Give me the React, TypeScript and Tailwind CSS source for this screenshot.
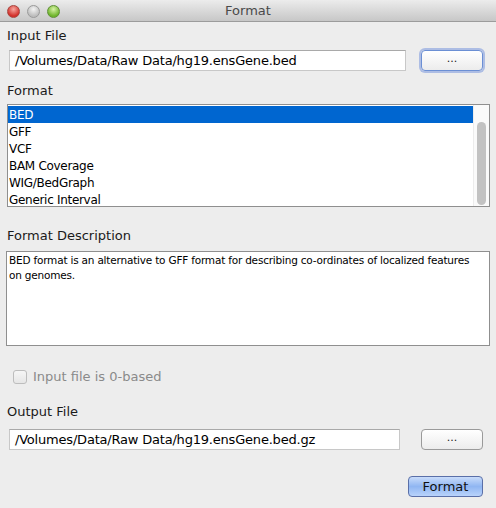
import React from "react";

const formats = ["BED", "GFF", "VCF", "BAM Coverage", "WIG/BedGraph", "Generic Interval"];

function Light({ from, to, ring }: { from: string; to: string; ring: string }) {
  return (
    <span
      className="block h-[13px] w-[13px] rounded-full border"
      style={{ background: `radial-gradient(circle at 50% 30%, ${from}, ${to} 70%)`, borderColor: ring }}
    />
  );
}

function Field({ value, width }: { value: string; width: string }) {
  return (
    <div
      className={`${width} flex h-[21px] items-center border border-[#c8c8c8] border-t-[#a9a9a9] bg-white pl-[5px] text-[13px] tracking-[-0.2px] text-black`}
    >
      {value}
    </div>
  );
}

function Browse({ focused }: { focused?: boolean }) {
  return (
    <button
      className={`flex h-[21px] w-[62px] items-center justify-center rounded-[4px] border bg-gradient-to-b from-white to-[#ececec] pb-[3px] text-[11px] text-[#222] ${
        focused ? "border-[#6b8fd4] shadow-[0_0_0_2px_rgba(120,150,220,0.55)]" : "border-[#9a9a9a]"
      }`}
    >
      ...
    </button>
  );
}

export default function App() {
  return (
    <div
      className="flex h-[508px] w-[496px] flex-col overflow-hidden bg-[#ededed] text-[#1a1a1a]"
      style={{ fontFamily: '"DejaVu Sans", "Liberation Sans", sans-serif' }}
    >
      <div className="relative flex h-[22px] shrink-0 items-center justify-center border-b border-[#9c9c9c] bg-gradient-to-b from-[#ececec] to-[#c7c7c7]">
        <div className="absolute left-[7px] top-[5px] flex gap-[7px]">
          <Light from="#f7a8a0" to="#d2302a" ring="#a8443e" />
          <Light from="#f4f4f4" to="#bdbdbd" ring="#9a9a9a" />
          <Light from="#d8f3a6" to="#6fb52c" ring="#5f8f36" />
        </div>
        <span className="text-[13px] text-[#4a4a4a]">Format</span>
      </div>

      <div className="flex flex-col px-[7px]">
        <div className="mt-[6px] text-[13px] leading-[16px]">Input File</div>
        <div className="mt-[6px] flex items-center">
          <div className="ml-[2px]">
            <Field value="/Volumes/Data/Raw Data/hg19.ensGene.bed" width="w-[397px]" />
          </div>
          <div className="ml-[15px]">
            <Browse focused />
          </div>
        </div>

        <div className="mt-[12px] text-[13px] leading-[16px]">Format</div>
        <div className="mt-[5px] flex h-[103px] w-[483px] border border-[#8f8f8f] bg-white">
          <div className="flex flex-1 flex-col pt-px">
            {formats.map((f, i) => (
              <div
                key={f}
                className={`flex h-[17px] items-center pl-px text-[12px] tracking-[-0.3px] ${
                  i === 0 ? "bg-[#0066d0] text-white" : "text-black"
                }`}
              >
                {f}
              </div>
            ))}
          </div>
          <div className="flex w-[16px] flex-col border-l border-[#ececec] bg-[#fafafa] px-[3px] pb-px pt-[17px]">
            <div className="flex-1 rounded-full bg-[#c2c2c2]" />
          </div>
        </div>

        <div className="mt-[21px] text-[13px] leading-[16px]">Format Description</div>
        <div className="-ml-px mt-[7px] h-[95px] w-[484px] border border-[#8f8f8f] bg-white pl-[2px] pr-[12px] pt-px text-[10.5px] leading-[15px] tracking-[-0.2px] text-black">
          BED format is an alternative to GFF format for describing co-ordinates of localized features on genomes.
        </div>

        <div className="mt-[23px] flex items-center">
          <span className="ml-[6px] h-[14px] w-[14px] rounded-[3px] border border-[#bdbdbd] bg-gradient-to-b from-[#f6f6f6] to-[#e6e6e6]" />
          <span className="ml-[6px] text-[13px] leading-[16px] text-[#8a8a8a]">Input file is 0-based</span>
        </div>

        <div className="mt-[19px] text-[13px] leading-[16px]">Output File</div>
        <div className="mt-[9px] flex items-center">
          <div className="ml-[2px]">
            <Field value="/Volumes/Data/Raw Data/hg19.ensGene.bed.gz" width="w-[391px]" />
          </div>
          <div className="ml-[21px]">
            <Browse />
          </div>
        </div>

        <div className="mt-[26px] flex justify-end pr-[6px]">
          <button className="flex h-[21px] w-[75px] items-center justify-center rounded-[4px] border border-[#5a6fa8] bg-gradient-to-b from-[#c9dcfa] via-[#90b6f2] to-[#b9d3fb] text-[13px] text-[#111]">
            Format
          </button>
        </div>
      </div>
    </div>
  );
}
